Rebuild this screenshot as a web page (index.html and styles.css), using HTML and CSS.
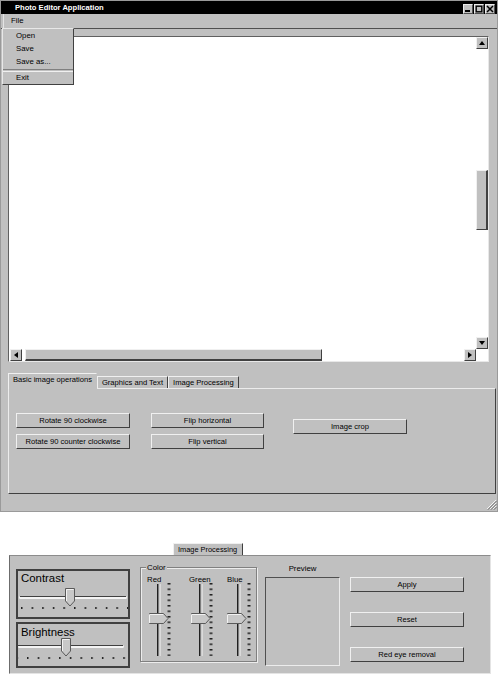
FILE: index.html
```html
<!DOCTYPE html>
<html lang="en">
<head>
    <meta charset="UTF-8">
    <meta name="viewport" content="width=device-width, initial-scale=1.0">
    <title>Photo Editor Application</title>
    <link rel="stylesheet" href="styles.css">
</head>
<body>
    <div class="window">
        <div class="titlebar">
            <span class="title">Photo Editor Application</span>
            <div class="win-buttons">
                <span class="win-btn"><svg width="8" height="8"><rect x="1" y="5" width="5" height="2" fill="#000"/></svg></span>
                <span class="win-btn"><svg width="8" height="8"><rect x="1.2" y="1.2" width="5.6" height="5.6" fill="none" stroke="#000" stroke-width="1.4"/></svg></span>
                <span class="win-btn"><svg width="8" height="8"><path d="M1 1 L7 7 M7 1 L1 7" stroke="#000" stroke-width="1.5"/></svg></span>
            </div>
        </div>

        <div class="menubar">
            <span class="menu-item">File</span>
        </div>

        <!-- open File menu -->
        <div class="dropdown">
            <div class="dd-item">Open</div>
            <div class="dd-item">Save</div>
            <div class="dd-item">Save as...</div>
            <div class="dd-sep"></div>
            <div class="dd-item">Exit</div>
        </div>

        <div class="canvas">
            <div class="canvas-main">
                <div class="viewport"></div>
                <div class="vscroll">
                    <div class="arrow"><svg width="10" height="10"><polygon points="5,3 8,7 2,7" fill="#000"/></svg></div>
                    <div class="vthumb"></div>
                    <div class="arrow arrow-end"><svg width="10" height="10"><polygon points="2,3 8,3 5,7" fill="#000"/></svg></div>
                </div>
            </div>
            <div class="hscroll">
                <div class="arrow arrow-left"><svg width="10" height="10"><polygon points="3,5 7,2 7,8" fill="#000"/></svg></div>
                <div class="hthumb"></div>
                <div class="arrow arrow-end"><svg width="10" height="10"><polygon points="3,2 7,5 3,8" fill="#000"/></svg></div>
                <div class="corner"></div>
            </div>
        </div>

        <div class="tabs">
            <div class="tab selected">Basic image operations</div>
            <div class="tab">Graphics and Text</div>
            <div class="tab">Image Processing</div>
        </div>
        <div class="tab-panel">
            <div class="btn-col">
                <button class="btn">Rotate 90 clockwise</button>
                <button class="btn">Rotate 90 counter clockwise</button>
            </div>
            <div class="btn-col col-flip">
                <button class="btn">Flip horizontal</button>
                <button class="btn">Flip vertical</button>
            </div>
            <button class="btn btn-crop">Image crop</button>
        </div>

        <div class="grip">
            <svg width="12" height="12">
                <path d="M11 2 L2 11 M11 5 L5 11 M11 8 L8 11" stroke="#f4f4f4" stroke-width="1"/>
                <path d="M11.8 2.8 L2.8 11.8 M11.8 5.8 L5.8 11.8 M11.8 8.8 L8.8 11.8" stroke="#707070" stroke-width="1"/>
            </svg>
        </div>
    </div>

    <div class="proc">
        <div class="proc-tab">Image Processing</div>
        <div class="proc-panel">
            <div class="adjust-col">
                <div class="adjust-box contrast">
                    <div class="adjust-label">Contrast</div>
                    <svg class="hslider" width="110" height="24">
                        <defs>
                            <pattern id="tickContrast" x="3" y="0" width="10.6" height="24" patternUnits="userSpaceOnUse">
                                <rect x="0" y="21" width="1.5" height="2" fill="#202020"/>
                            </pattern>
                        </defs>
                        <rect x="1" y="10" width="108" height="3" rx="1.5" fill="#f4f4f4"/>
                        <line x1="2" y1="10.5" x2="108" y2="10.5" stroke="#404040"/>
                        <rect x="0" y="0" width="110" height="24" fill="url(#tickContrast)"/>
                        <polygon points="47.5,2.5 56.5,2.5 56.5,15 52,20 47.5,15" fill="#c8c8c8" stroke="#5a5a5a"/>
                        <polyline points="48.5,15 48.5,3.5 55.5,3.5" fill="none" stroke="#f2f2f2"/>
                    </svg>
                </div>
                <div class="adjust-box brightness">
                    <div class="adjust-label">Brightness</div>
                    <svg class="hslider" width="110" height="22">
                        <defs>
                            <pattern id="tickBright" x="9" y="0" width="10.7" height="22" patternUnits="userSpaceOnUse">
                                <rect x="0" y="19" width="1.5" height="2" fill="#202020"/>
                            </pattern>
                        </defs>
                        <rect x="0" y="7" width="106" height="3" rx="1.5" fill="#f4f4f4"/>
                        <line x1="0" y1="7.5" x2="105" y2="7.5" stroke="#404040"/>
                        <rect x="0" y="0" width="110" height="22" fill="url(#tickBright)"/>
                        <polygon points="43.5,0.5 52.5,0.5 52.5,13 48,18 43.5,13" fill="#c8c8c8" stroke="#5a5a5a"/>
                        <polyline points="44.5,13 44.5,1.5 51.5,1.5" fill="none" stroke="#f2f2f2"/>
                    </svg>
                </div>
            </div>

            <div class="color-group">
                <span class="legend">Color</span>
                <div class="channels">
                    <div class="channel red">
                        <div class="channel-label">Red</div>
                        <svg width="26" height="74">
                            <defs>
                                <pattern id="tickV" x="0" y="0" width="26" height="5.5" patternUnits="userSpaceOnUse">
                                    <rect x="20.5" y="0" width="3" height="1.5" fill="#202020"/>
                                </pattern>
                            </defs>
                            <rect x="10" y="1" width="1.5" height="72" fill="#202020"/>
                            <rect x="11.5" y="1" width="1" height="72" fill="#8a8a8a"/>
                            <rect x="12.5" y="1" width="1" height="72" fill="#f4f4f4"/>
                            <rect x="0" y="0" width="26" height="73" fill="url(#tickV)"/>
                            <polygon points="2.5,30.5 16.5,30.5 21,35.5 16.5,40.5 2.5,40.5" fill="#c8c8c8" stroke="#5a5a5a"/>
                            <polyline points="2.5,40 2.5,31.5 16,31.5" fill="none" stroke="#f2f2f2"/>
                        </svg>
                    </div>
                    <div class="channel green">
                        <div class="channel-label">Green</div>
                        <svg width="26" height="74">
                            <rect x="10" y="1" width="1.5" height="72" fill="#202020"/>
                            <rect x="11.5" y="1" width="1" height="72" fill="#8a8a8a"/>
                            <rect x="12.5" y="1" width="1" height="72" fill="#f4f4f4"/>
                            <rect x="0" y="0" width="26" height="73" fill="url(#tickV)"/>
                            <polygon points="2.5,30.5 16.5,30.5 21,35.5 16.5,40.5 2.5,40.5" fill="#c8c8c8" stroke="#5a5a5a"/>
                            <polyline points="2.5,40 2.5,31.5 16,31.5" fill="none" stroke="#f2f2f2"/>
                        </svg>
                    </div>
                    <div class="channel blue">
                        <div class="channel-label">Blue</div>
                        <svg width="26" height="74">
                            <rect x="10" y="1" width="1.5" height="72" fill="#202020"/>
                            <rect x="11.5" y="1" width="1" height="72" fill="#8a8a8a"/>
                            <rect x="12.5" y="1" width="1" height="72" fill="#f4f4f4"/>
                            <rect x="0" y="0" width="26" height="73" fill="url(#tickV)"/>
                            <polygon points="0.5,30.5 14.5,30.5 19,35.5 14.5,40.5 0.5,40.5" fill="#c8c8c8" stroke="#5a5a5a"/>
                            <polyline points="0.5,40 0.5,31.5 14,31.5" fill="none" stroke="#f2f2f2"/>
                        </svg>
                    </div>
                </div>
            </div>

            <div class="preview-col">
                <div class="preview-label">Preview</div>
                <div class="preview-box"></div>
            </div>

            <div class="action-col">
                <button class="btn">Apply</button>
                <button class="btn">Reset</button>
                <button class="btn">Red eye removal</button>
            </div>
        </div>
    </div>
</body>
</html>
```

FILE: styles.css
```css
body {
    margin: 0;
    background: #fff;
    font-family: "Liberation Sans", Arial, sans-serif;
    font-size: 7.8px;
    color: #000;
}

/* main window */
.window {
    position: relative;
    display: flex;
    flex-direction: column;
    width: 498px;
    height: 512px;
    box-sizing: border-box;
    border: 1px solid #9a9a9a;
    background: #c0c0c0;
}
.titlebar {
    display: flex;
    justify-content: space-between;
    height: 13px;
    background: #000;
    color: #fff;
}
.title {
    padding-left: 14px;
    font-weight: bold;
    font-size: 7.6px;
    line-height: 13px;
}
.win-buttons {
    display: flex;
    gap: 1px;
    padding: 3px 2px 0 0;
}
.win-btn {
    width: 10px;
    height: 10px;
    box-sizing: border-box;
    background: #c0c0c0;
    border-top: 1px solid #ececec;
    border-left: 1px solid #ececec;
    border-right: 1px solid #505050;
    border-bottom: 1px solid #505050;
}
.win-btn svg {
    display: block;
}
.menubar {
    height: 14px;
    border-bottom: 1px solid #505050;
    padding-left: 2px;
}
.menu-item {
    display: inline-block;
    height: 14px;
    line-height: 14px;
    padding: 0 4px 0 7px;
    border-left: 1px solid #e4e4e4;
}

.dropdown {
    position: absolute;
    left: 1px;
    top: 27px;
    width: 72px;
    box-sizing: border-box;
    background: #c0c0c0;
    border-top: 1px solid #e8e8e8;
    border-left: 1px solid #e8e8e8;
    border-right: 1px solid #404040;
    border-bottom: 1px solid #404040;
    z-index: 10;
}
.dd-item {
    height: 13px;
    line-height: 13px;
    padding-left: 13px;
}
.dd-item:last-child {
    height: 12px;
    line-height: 12px;
}
.dd-sep {
    height: 3px;
    box-sizing: border-box;
    border-top: 1px solid #808080;
    border-bottom: 1px solid #f0f0f0;
    margin-top: 1px;
}

/* drawing area */
.canvas {
    display: flex;
    flex-direction: column;
    margin: 7px 0 0 7px;
    width: 481px;
    height: 326px;
    box-sizing: border-box;
    background: #fff;
    border-top: 1px solid #606060;
    border-left: 1px solid #606060;
    border-right: 1px solid #e8e8e8;
    border-bottom: 1px solid #e8e8e8;
}
.canvas-main {
    display: flex;
    flex: 1;
}
.viewport {
    flex: 1;
}
.vscroll {
    display: flex;
    flex-direction: column;
    width: 12px;
}
.hscroll {
    display: flex;
    height: 12px;
}
.arrow, .vthumb, .hthumb, .btn, .tab, .proc-tab {
    box-sizing: border-box;
    background: #c0c0c0;
    border-top: 1px solid #f0f0f0;
    border-left: 1px solid #f0f0f0;
    border-right: 1px solid #404040;
    border-bottom: 1px solid #404040;
}
.arrow {
    width: 12px;
    height: 12px;
}
.arrow svg {
    display: block;
}
.arrow-end {
    margin-left: auto;
    margin-top: auto;
}
.arrow-left {
    margin-left: 1px;
}
.vthumb {
    height: 60px;
    margin-top: 121px;
    border-right-width: 2px;
}
.hthumb {
    width: 297px;
    margin-left: 3px;
    border-bottom-width: 2px;
}
.corner {
    width: 12px;
}

/* tabs */
.tabs {
    display: flex;
    align-items: flex-end;
    height: 16px;
    margin: 11px 0 -1px 7px;
}
.tab {
    height: 12px;
    line-height: 11px;
    padding: 0 4px;
    border-bottom: none;
    margin-bottom: 1px;
    font-size: 7.6px;
}
.tab.selected {
    position: relative;
    height: 16px;
    line-height: 12px;
    margin-bottom: 0;
    border-right-color: #c0c0c0;
}
.tab-panel {
    display: flex;
    align-items: flex-start;
    width: 488px;
    height: 106px;
    margin-left: 7px;
    box-sizing: border-box;
    padding: 24px 0 0 7px;
    border-top: 1px solid #ececec;
    border-left: 1px solid #ececec;
    border-right: 1px solid #404040;
    border-bottom: 1px solid #404040;
}
.btn {
    display: block;
    width: 114px;
    height: 15px;
    padding: 0;
    font-family: inherit;
    font-size: 7.6px;
    color: #000;
    text-align: center;
    line-height: 12px;
}
.btn-col {
    display: flex;
    flex-direction: column;
    gap: 6px;
}
.col-flip {
    margin-left: 21px;
}
.col-flip .btn {
    width: 113px;
}
.btn-crop {
    margin: 6px 0 0 29px;
}
.grip {
    display: flex;
    justify-content: flex-end;
    margin-top: auto;
    padding-bottom: 1px;
}
.grip svg {
    display: block;
}

/* image processing panel */
.proc {
    margin: 31px 0 0 9px;
    width: 482px;
}
.proc-tab {
    width: 70px;
    height: 12px;
    margin-left: 164px;
    line-height: 11px;
    padding: 0 4px;
    border-bottom: none;
    white-space: nowrap;
    font-size: 7.4px;
}
.proc-panel {
    display: flex;
    align-items: flex-start;
    height: 119px;
    box-sizing: border-box;
    padding: 11px 0 0 6px;
    background: #c0c0c0;
    border-top: 1px solid #8c8c8c;
    border-left: 1px solid #6c6c6c;
    border-right: 1px solid #e4e4e4;
    border-bottom: 1px solid #e4e4e4;
}
.adjust-col {
    display: flex;
    flex-direction: column;
    gap: 3px;
    margin-top: 2px;
}
.adjust-box {
    width: 114px;
    box-sizing: border-box;
    border: 2px solid #404040;
}
.contrast {
    height: 50px;
}
.brightness {
    height: 46px;
}
.adjust-label {
    font-size: 11.4px;
    line-height: 13px;
    padding: 1px 0 0 3px;
}
.brightness .adjust-label {
    line-height: 12px;
    padding-top: 2px;
}
.hslider {
    display: block;
}
.contrast .hslider {
    margin-top: 1px;
}

.color-group {
    position: relative;
    width: 117px;
    height: 95px;
    margin-left: 10px;
    box-sizing: border-box;
    border: 1px solid #808080;
    box-shadow: inset 1px 1px #ececec, 1px 1px #ececec;
    padding: 8px 0 0 6px;
}
.legend {
    position: absolute;
    left: 5px;
    top: -5px;
    padding: 0 1px;
    line-height: 9px;
    background: #c0c0c0;
}
.channels {
    display: flex;
}
.channel svg {
    display: block;
}
.channel-label {
    line-height: 7px;
}
.red {
    width: 42px;
}
.green {
    width: 38px;
}

.preview-col {
    display: flex;
    flex-direction: column;
    width: 75px;
    margin: -2px 0 0 8px;
}
.preview-label {
    text-align: center;
    line-height: 8px;
}
.preview-box {
    height: 89px;
    margin-top: 4px;
    box-sizing: border-box;
    border-top: 1px solid #505050;
    border-left: 1px solid #505050;
    border-right: 1px solid #ececec;
    border-bottom: 1px solid #ececec;
}
.action-col {
    display: flex;
    flex-direction: column;
    gap: 20px;
    margin: 10px 0 0 10px;
}
```
